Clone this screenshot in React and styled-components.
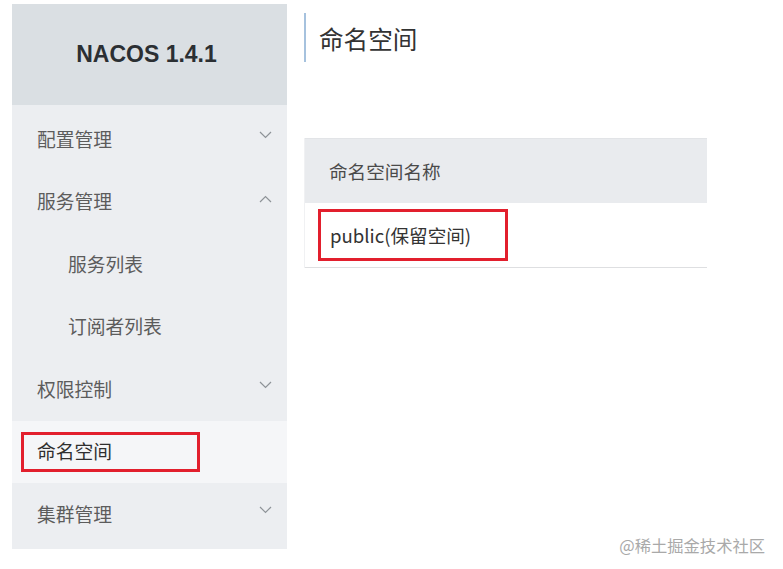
import React from "react";
import styled, { createGlobalStyle } from "styled-components";

const GlobalStyle = createGlobalStyle`
  html, body {
    margin: 0;
    padding: 0;
    background: #ffffff;
  }
  body {
    font-family: "Noto Sans CJK SC", "Noto Sans", sans-serif;
    width: 783px;
    height: 569px;
    overflow: hidden;
  }
`;

const Page = styled.div`
  position: relative;
  display: flex;
  align-items: flex-start;
  gap: 17px;
  width: 783px;
  height: 569px;
  padding: 4px 0 0 12px;
  box-sizing: border-box;
`;

const Sidebar = styled.aside`
  width: 275px;
  height: 545px;
  display: flex;
  flex-direction: column;
  background: #eceef1;
`;

const Brand = styled.div`
  height: 101px;
  flex: none;
  display: flex;
  align-items: center;
  justify-content: center;
  padding-right: 6px;
  background: #dadfe3;
  font-family: "Liberation Sans", Arial, sans-serif;
  font-weight: 700;
  font-size: 23px;
  color: #2b2f33;
`;

const Menu = styled.ul`
  list-style: none;
  margin: 0;
  padding: 3px 0 0;
`;

const MenuItem = styled.li`
  height: 62.5px;
  display: flex;
  align-items: center;
  justify-content: space-between;
  padding: 0 15px 0 ${({ $sub }) => ($sub ? "56px" : "25px")};
  background: ${({ $active }) => ($active ? "#f5f6f8" : "transparent")};
  font-size: 18.8px;
  line-height: 1;
  color: ${({ $active }) => ($active ? "#2f2f2f" : "#5c5c5c")};
`;

const Highlight = styled.span`
  display: flex;
  align-items: center;
  box-sizing: border-box;
  width: ${({ $w }) => $w}px;
  height: ${({ $h }) => $h}px;
  margin-left: ${({ $shift }) => -$shift}px;
  padding-left: ${({ $shift }) => $shift - 3}px;
  border: 3px solid #e21f2d;
`;

const Chevron = styled.svg`
  width: 13px;
  height: 8px;
  margin-top: ${({ $up }) => ($up ? "-6px" : "-8px")};
`;

const Main = styled.main`
  width: 403px;
  display: flex;
  flex-direction: column;
  padding-top: 9px;
`;

const Title = styled.h1`
  margin: 0;
  height: 49px;
  display: flex;
  align-items: center;
  padding-left: 13px;
  padding-top: 2px;
  box-sizing: border-box;
  border-left: 2px solid #a6c2de;
  font-size: 24.6px;
  font-weight: 400;
  line-height: 1;
  color: #333;
`;

const Table = styled.div`
  margin-top: 76px;
  display: flex;
  flex-direction: column;
  border-left: 1px solid #f0f1f3;
`;

const HeadRow = styled.div`
  height: 65px;
  display: flex;
  align-items: center;
  padding-left: 24px;
  background: #e9ebee;
  border-top: 1px solid #e2e4e7;
  box-sizing: border-box;
  font-size: 18.6px;
  line-height: 1;
  color: #4a4a4a;
`;

const BodyRow = styled.div`
  height: 65px;
  display: flex;
  align-items: center;
  padding-left: 25px;
  border-bottom: 1px solid #dedfe1;
  box-sizing: border-box;
  font-size: 18.6px;
  line-height: 1;
  color: #333;
`;

const Watermark = styled.div`
  position: absolute;
  right: 18px;
  bottom: 16px;
  font-size: 16.3px;
  line-height: 1;
  color: #a9a9a9;
  text-shadow: 0 0 1px #fff;
`;

const Arrow = ({ up }) => (
  <Chevron $up={up} viewBox="0 0 13 8" fill="none">
    <path
      d={up ? "M1 7 L6.5 1.5 L12 7" : "M1 1 L6.5 6.5 L12 1"}
      stroke="#8e9398"
      strokeWidth="1.2"
    />
  </Chevron>
);

const menu = [
  { label: "配置管理", arrow: "down" },
  { label: "服务管理", arrow: "up" },
  { label: "服务列表", sub: true },
  { label: "订阅者列表", sub: true },
  { label: "权限控制", arrow: "down" },
  { label: "命名空间", active: true },
  { label: "集群管理", arrow: "down" },
];

export default function App() {
  return (
    <>
      <GlobalStyle />
      <Page>
        <Sidebar>
          <Brand>NACOS 1.4.1</Brand>
          <Menu>
            {menu.map((item) => (
              <MenuItem key={item.label} $sub={item.sub} $active={item.active}>
                {item.active ? (
                  <Highlight $w={179} $h={40} $shift={16}>
                    {item.label}
                  </Highlight>
                ) : (
                  <span>{item.label}</span>
                )}
                {item.arrow && <Arrow up={item.arrow === "up"} />}
              </MenuItem>
            ))}
          </Menu>
        </Sidebar>
        <Main>
          <Title>命名空间</Title>
          <Table>
            <HeadRow>命名空间名称</HeadRow>
            <BodyRow>
              <Highlight $w={190} $h={52} $shift={12}>
                public(保留空间)
              </Highlight>
            </BodyRow>
          </Table>
        </Main>
        <Watermark>@稀土掘金技术社区</Watermark>
      </Page>
    </>
  );
}
